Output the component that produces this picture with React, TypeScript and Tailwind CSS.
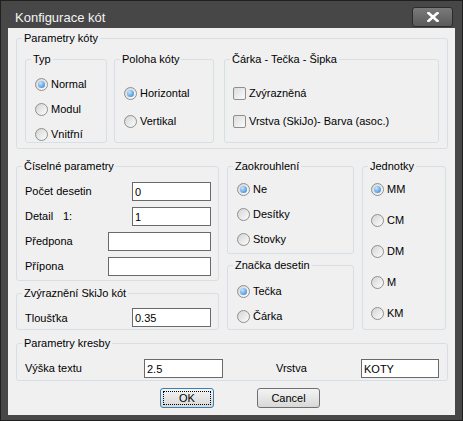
import React from 'react';

type GroupProps = { title: string; className?: string; children?: React.ReactNode };

const Group: React.FC<GroupProps> = ({ title, className = '', children }) => (
  <fieldset className={`shrink-0 border border-[#d5dfe5] rounded-[3px] ${className}`}>
    <legend className="ml-[5px] px-[2px] text-[11px] leading-[12px]">{title}</legend>
    {children}
  </fieldset>
);

const Radio: React.FC<{ label: string; checked?: boolean }> = ({ label, checked }) => (
  <div className="flex items-center h-[13px]">
    <span className="w-[13px] h-[13px] shrink-0 rounded-full border border-[#8e8f8f] bg-linear-to-br from-[#d4d4d4] to-[#fdfdfd] flex items-center justify-center">
      {checked && (
        <span className="w-[7px] h-[7px] rounded-full bg-radial-[at_35%_30%] from-[#c4e6ff] to-[#2a7ad2]" />
      )}
    </span>
    <span className="ml-[3px] text-[11px] leading-[13px] whitespace-nowrap">{label}</span>
  </div>
);

const Check: React.FC<{ label: string }> = ({ label }) => (
  <div className="flex items-center h-[13px]">
    <span className="w-[13px] h-[13px] shrink-0 rounded-[2px] border border-[#8e8f8f] bg-linear-to-br from-[#dcdcdc] to-[#fbfbfb]" />
    <span className="ml-[3px] text-[11px] leading-[13px] whitespace-nowrap">{label}</span>
  </div>
);

const Field: React.FC<{ value: string; className: string }> = ({ value, className }) => (
  <input
    readOnly
    value={value}
    className={`h-[19px] shrink-0 border border-[#6a6a6a] bg-white px-[2px] text-[11px] text-black outline-none ${className}`}
  />
);

export default function App() {
  return (
    <div className="w-[463px] h-[421px] flex flex-col bg-[#474747] border border-[#1f1f1f] px-[7px] pb-[5px] font-['Liberation_Sans',Arial,sans-serif] text-black select-none">
      {/* title bar */}
      <div className="h-[27px] shrink-0 flex items-start">
        <span className="mt-[9px] ml-[7px] text-[13px] leading-[16px] text-[#f4f4f4]">Konfigurace kót</span>
        <button className="ml-auto mt-[6px] mr-[2px] w-[41px] h-[20px] rounded-[3px] border border-[#2c2c2c] bg-linear-to-b from-[#7a7a7a] to-[#5a5a5a] flex items-center justify-center">
          <svg width="12" height="10" viewBox="0 0 12 10">
            <path d="M1.5 1 L10.5 9 M10.5 1 L1.5 9" stroke="#fff" strokeWidth="2.6" strokeLinecap="square" />
          </svg>
        </button>
      </div>

      {/* client area */}
      <div className="flex-1 flex flex-col bg-[#f0f0f0] pl-[8px] pt-[4px]">
        <Group title="Parametry kóty" className="w-[432px] h-[117px]">
          <div className="flex mt-[9px] ml-[8px]">
            <Group title="Typ" className="w-[82px] h-[90px]">
              <div className="mt-[13px] ml-[9px] flex flex-col gap-[12px]">
                <Radio label="Normal" checked />
                <Radio label="Modul" />
                <Radio label="Vnitřní" />
              </div>
            </Group>
            <Group title="Poloha kóty" className="w-[100px] h-[90px] ml-[7px]">
              <div className="mt-[22px] ml-[9px] flex flex-col gap-[15px]">
                <Radio label="Horizontal" checked />
                <Radio label="Vertikal" />
              </div>
            </Group>
            <Group title="Čárka - Tečka - Šipka" className="w-[215px] h-[90px] ml-[10px]">
              <div className="mt-[22px] ml-[8px] flex flex-col gap-[15px]">
                <Check label="Zvýrazněná" />
                <Check label="Vrstva (SkiJo)- Barva (asoc.)" />
              </div>
            </Group>
          </div>
        </Group>

        <div className="flex mt-[11px]">
          <div className="flex flex-col w-[203px]">
            <Group title="Číselné parametry" className="h-[121px]">
              <div className="mt-[10px] ml-[8px] flex flex-col gap-[6px] text-[11px]">
                <div className="flex items-center">
                  <span className="w-[107px]">Počet desetin</span>
                  <Field value="0" className="w-[79px]" />
                </div>
                <div className="flex items-center">
                  <span className="w-[38px]">Detail</span>
                  <span className="w-[69px]">1:</span>
                  <Field value="1" className="w-[79px]" />
                </div>
                <div className="flex items-center">
                  <span className="w-[83px]">Předpona</span>
                  <Field value="" className="w-[103px]" />
                </div>
                <div className="flex items-center">
                  <span className="w-[83px]">Přípona</span>
                  <Field value="" className="w-[103px]" />
                </div>
              </div>
            </Group>
            <Group title="Zvýraznění SkiJo kót" className="h-[43px] mt-[6px]">
              <div className="mt-[9px] ml-[8px] flex items-center text-[11px]">
                <span className="w-[107px] pt-[2px]">Tloušťka</span>
                <Field value="0.35" className="w-[79px]" />
              </div>
            </Group>
          </div>

          <div className="flex flex-col w-[127px] ml-[8px]">
            <Group title="Zaokrouhlení" className="h-[94px]">
              <div className="mt-[11px] ml-[9px] flex flex-col gap-[12px]">
                <Radio label="Ne" checked />
                <Radio label="Desítky" />
                <Radio label="Stovky" />
              </div>
            </Group>
            <Group title="Značka desetin" className="h-[71px] mt-[5px]">
              <div className="mt-[14px] ml-[9px] flex flex-col gap-[12px]">
                <Radio label="Tečka" checked />
                <Radio label="Čárka" />
              </div>
            </Group>
          </div>

          <Group title="Jednotky" className="w-[84px] h-[170px] ml-[8px]">
            <div className="mt-[11px] ml-[8px] flex flex-col gap-[18px]">
              <Radio label="MM" checked />
              <Radio label="CM" />
              <Radio label="DM" />
              <Radio label="M" />
              <Radio label="KM" />
            </div>
          </Group>
        </div>

        <Group title="Parametry kresby" className="w-[432px] h-[44px] mt-[7px]">
          <div className="mt-[10px] ml-[8px] flex items-center text-[11px]">
            <span className="w-[119px]">Výška textu</span>
            <Field value="2.5" className="w-[79px]" />
            <span className="ml-[53px] w-[85px]">Vrstva</span>
            <Field value="KOTY" className="w-[78px]" />
          </div>
        </Group>

        <div className="flex mt-[7px] ml-[144px]">
          <button className="w-[54px] h-[20px] rounded-[3px] border border-[#3c7fb1] bg-linear-to-b from-[#f4f4f4] to-[#d8d8d8] p-[2px]">
            <span className="flex h-full items-center justify-center border border-dotted border-black text-[11px] leading-none">
              OK
            </span>
          </button>
          <button className="ml-[43px] w-[63px] h-[20px] rounded-[3px] border border-[#707070] bg-linear-to-b from-[#f4f4f4] to-[#d8d8d8] text-[11px] leading-none">
            Cancel
          </button>
        </div>
      </div>
    </div>
  );
}
